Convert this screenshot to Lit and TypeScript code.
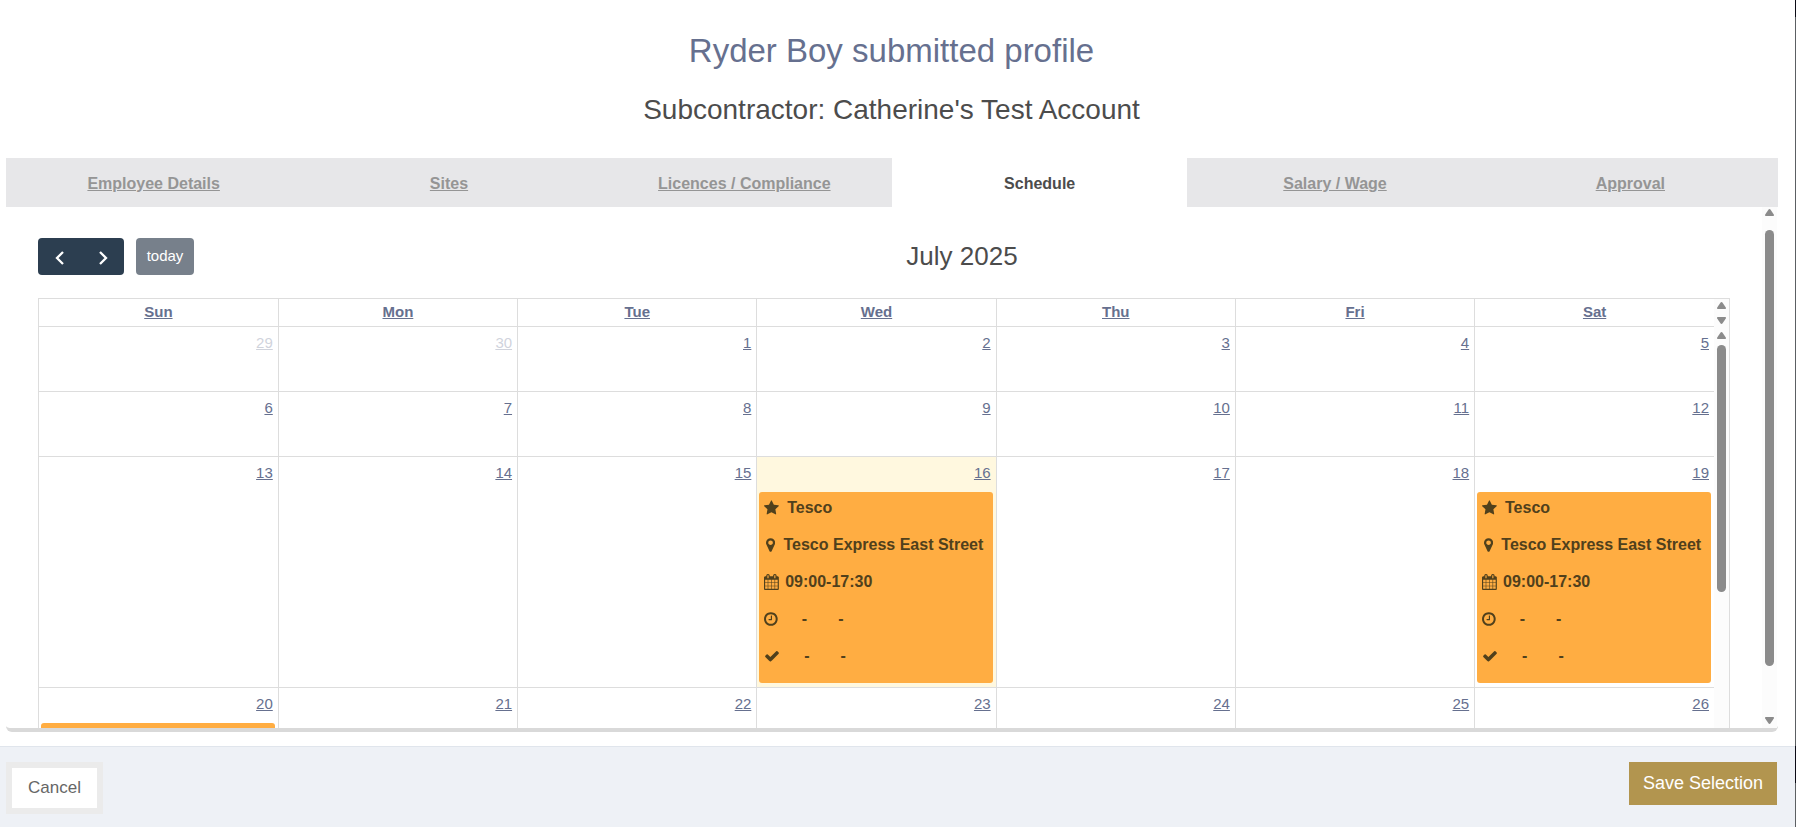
import { LitElement, html, css, svg } from "lit";
import { customElement, property, state } from "lit/decorators.js";
import { classMap } from "lit/directives/class-map.js";

interface Shift {
  client: string;
  site: string;
  hours: string;
}

interface Day {
  num: number;
  other?: boolean;
  today?: boolean;
  booked?: boolean;
  shift?: Shift;
}

const WEEKDAYS = ["Sun", "Mon", "Tue", "Wed", "Thu", "Fri", "Sat"];
const BOOKED_DAYS = [16, 19, 20];
const TODAY = 16;

const TESCO: Shift = {
  client: "Tesco",
  site: "Tesco Express East Street",
  hours: "09:00-17:30",
};

/* Details known so far; a booked day without details gets an empty card. */
const SHIFTS: Record<number, Shift> = { 16: TESCO, 19: TESCO };

const TABS = [
  "Employee Details",
  "Sites",
  "Licences / Compliance",
  "Schedule",
  "Salary / Wage",
  "Approval",
];

function buildWeeks(): Day[][] {
  const days: Day[] = [{ num: 29, other: true }, { num: 30, other: true }];
  for (let n = 1; n <= 26; n++) {
    days.push({
      num: n,
      today: n === TODAY,
      booked: BOOKED_DAYS.includes(n),
      shift: SHIFTS[n],
    });
  }
  const weeks: Day[][] = [];
  for (let i = 0; i < days.length; i += 7) weeks.push(days.slice(i, i + 7));
  return weeks;
}

/* Glyphs share a 1792-unit em, baseline at y=1536. */
const ICONS = {
  star: {
    width: 1664,
    path: svg`<path d="M1664 647q0 22-26 48l-363 354 86 500q1 7 1 20 0 21-10.500 35.500t-30.500 14.500q-19 0-40-12l-449-236-449 236q-22 12-40 12-21 0-31.500-14.500t-10.500-35.500q0-6 2-20l86-500-364-354q-25-27-25-48 0-37 56-46l502-73 225-455q19-41 49-41t49 41l225 455 502 73q56 9 56 46z"/>`,
  },
  pin: {
    width: 1024,
    path: svg`<path d="M768 640q0-106-75-181t-181-75-181 75-75 181 75 181 181 75 181-75 75-181zm256 0q0 109-33 179l-364 774q-16 33-47.500 52t-67.500 19-67.500-19-46.500-52l-365-774q-33-70-33-179 0-212 150-362t362-150 362 150 150 362z"/>`,
  },
  calendar: {
    width: 1664,
    path: svg`<path d="M128 1664h288v-288h-288v288zm352 0h320v-288h-320v288zm-352-352h288v-320h-288v320zm352 0h320v-320h-320v320zm-352-384h288v-288h-288v288zm736 736h320v-288h-320v288zm-384-736h320v-288h-320v288zm768 736h288v-288h-288v288zm-384-352h320v-320h-320v320zm-352-864v-288q0-13-9.500-22.500t-22.500-9.500h-64q-13 0-22.500 9.500t-9.500 22.500v288q0 13 9.500 22.500t22.500 9.500h64q13 0 22.500-9.500t9.500-22.500zm736 864h288v-320h-288v320zm-384-384h320v-288h-320v288zm384 0h288v-288h-288v288zm32-480v-288q0-13-9.500-22.500t-22.500-9.500h-64q-13 0-22.500 9.500t-9.500 22.500v288q0 13 9.500 22.500t22.500 9.500h64q13 0 22.500-9.500t9.500-22.500zm384-64v1280q0 52-38 90t-90 38h-1408q-52 0-90-38t-38-90v-1280q0-52 38-90t90-38h128v-96q0-66 47-113t113-47h64q66 0 113 47t47 113v96h384v-96q0-66 47-113t113-47h64q66 0 113 47t47 113v96h128q52 0 90 38t38 90z"/>`,
  },
  clock: {
    width: 1536,
    path: svg`<path d="M896 544v448q0 14-9 23t-23 9h-320q-14 0-23-9t-9-23v-64q0-14 9-23t23-9h224v-352q0-14 9-23t23-9h64q14 0 23 9t9 23zm416 352q0-148-73-273t-198-198-273-73-273 73-198 198-73 273 73 273 198 198 273 73 273-73 198-198 73-273zm224 0q0 209-103 385.500t-279.500 279.500-385.500 103-385.500-103-279.500-279.500-103-385.500 103-385.500 279.500-279.500 385.500-103 385.500 103 279.500 279.500 103 385.500z"/>`,
  },
  check: {
    width: 1792,
    path: svg`<path d="M1671 566q0 40-28 68l-724 724-136 136q-28 28-68 28t-68-28l-136-136-362-362q-28-28-28-68t28-68l136-136q28-28 68-28t68 28l294 295 656-657q28-28 68-28t68 28l136 136q28 28 28 68z"/>`,
  },
};

const icon = (name: keyof typeof ICONS) => html`
  <svg class="icon ${name}" viewBox="0 0 ${ICONS[name].width} 1792" aria-hidden="true">
    ${ICONS[name].path}
  </svg>
`;

@customElement("shift-card")
class ShiftCard extends LitElement {
  @property({ attribute: false }) shift?: Shift;

  static styles = css`
    :host {
      display: block;
      box-sizing: border-box;
      min-height: 191px;
      margin: 0 3px 0 2px;
      padding: 1px 4px 5px;
      border-radius: 3px;
      background: #ffad42;
      color: #50401c;
      font-size: 16px;
      font-weight: bold;
      line-height: 30px;
    }
    .line {
      display: flex;
      align-items: center;
      height: 30px;
      margin-bottom: 7px;
    }
    .line span {
      white-space: pre;
    }
    .icon {
      height: 16px;
      flex: none;
      fill: currentColor;
      margin-left: 1px;
      margin-right: 6px;
    }
    .star {
      margin-right: 8px;
    }
    .pin {
      margin: 0 8px 0 3px;
    }
  `;

  render() {
    if (!this.shift) return html``;
    return html`
      <div class="line">${icon("star")}<span>${this.shift.client}</span></div>
      <div class="line">${icon("pin")}<span>${this.shift.site}</span></div>
      <div class="line">${icon("calendar")}<span>${this.shift.hours}</span></div>
      <div class="line">${icon("clock")}<span>${"    -       -"}</span></div>
      <div class="line">${icon("check")}<span>${"    -       -"}</span></div>
    `;
  }
}

@customElement("scroll-rail")
class ScrollRail extends LitElement {
  @property({ type: Number }) lead = 0;
  @property({ type: Number }) thumb = 0;
  @property({ type: Number }) rest = 1;
  @property({ type: Boolean }) open = false;

  static styles = css`
    :host {
      display: flex;
      flex-direction: column;
      align-items: center;
      flex: none;
      box-sizing: border-box;
      width: 15px;
      padding: 3px 0;
      background: #fcfcfc;
    }
    .arrow {
      width: 9px;
      height: 7px;
      flex: none;
      fill: #8b8b8b;
    }
    .track {
      flex: 1;
      width: 9px;
      display: flex;
      flex-direction: column;
    }
    .thumb {
      border-radius: 5px;
      background: #8b8b8b;
    }
  `;

  render() {
    return html`
      <svg class="arrow" viewBox="0 0 9 7"><path d="M4.500 0Q5.100 0 5.600 0.700L8.800 5.600Q9.400 6.900 8.200 7H0.800Q-0.400 6.900 0.200 5.600L3.400 0.700Q3.900 0 4.500 0Z" /></svg>
      <div class="track">
        <div style="flex:${this.lead}"></div>
        <div class="thumb" style="flex:${this.thumb}"></div>
        <div style="flex:${this.rest}"></div>
      </div>
      ${this.open
        ? ""
        : html`<svg class="arrow" viewBox="0 0 9 7"><path d="M4.500 7Q5.100 7 5.600 6.300L8.800 1.400Q9.400 0.100 8.200 0H0.800Q-0.400 0.100 0.200 1.400L3.400 6.300Q3.900 7 4.500 7Z" /></svg>`}
    `;
  }
}

@customElement("month-grid")
class MonthGrid extends LitElement {
  private weeks = buildWeeks();

  static styles = css`
    :host {
      display: flex;
      flex-direction: column;
      min-height: 0;
      border: 1px solid #ddd;
      border-bottom: 0;
      font-size: 15px;
    }
    .row {
      display: flex;
    }
    .body {
      flex: 1;
      min-height: 0;
    }
    .scroller {
      flex: 1;
      min-width: 0;
      overflow: hidden;
    }
    table {
      width: 100%;
      border-collapse: collapse;
      table-layout: fixed;
    }
    th,
    td {
      padding: 0;
      border: 0 solid #ddd;
      border-bottom-width: 1px;
      vertical-align: top;
    }
    th + th,
    td + td {
      border-left-width: 1px;
    }
    th {
      height: 27px;
      line-height: 25px;
    }
    td {
      height: 64px;
    }
    a {
      color: #66708f;
    }
    .num {
      display: block;
      box-sizing: border-box;
      padding: 4px 5px 0;
      height: 35px;
      line-height: 24px;
      text-align: right;
    }
    .other {
      opacity: 0.3;
    }
    .today {
      background: #fff8df;
    }
    shift-card {
      margin-bottom: 4px;
    }
    .body scroll-rail {
      padding: 5px 0 0;
    }
  `;

  render() {
    return html`
      <div class="row">
        <div class="scroller">
          <table>
            <tr>
              ${WEEKDAYS.map((d) => html`<th scope="col"><a href="#${d}">${d}</a></th>`)}
            </tr>
          </table>
        </div>
        <scroll-rail></scroll-rail>
      </div>
      <div class="row body">
        <div class="scroller">
          <table>
            ${this.weeks.map(
              (week) => html`<tr>
                ${week.map(
                  (day) => html`<td class=${classMap({ today: !!day.today })}>
                    <div class=${classMap({ num: true, other: !!day.other })}>
                      <a href="#day-${day.num}">${day.num}</a>
                    </div>
                    ${day.booked
                      ? html`<shift-card .shift=${day.shift}></shift-card>`
                      : ""}
                  </td>`,
                )}
              </tr>`,
            )}
          </table>
        </div>
        <scroll-rail open .lead=${6} .thumb=${247} .rest=${136}></scroll-rail>
      </div>
    `;
  }
}

@customElement("app-root")
class AppRoot extends LitElement {
  @state() private active = "Schedule";

  static styles = css`
    :host {
      display: flex;
      box-sizing: border-box;
      height: 100vh;
      background: #fff;
      color: #4c4c4c;
      font-family: "Liberation Sans", Arial, sans-serif;
      font-size: 16px;
    }
    .page {
      display: flex;
      flex-direction: column;
      flex: 1;
      min-width: 0;
    }
    .edge {
      width: 1px;
      background: linear-gradient(
        #0b0b16 17px,
        #5c6063 17px calc(100% - 81px),
        #0b0b16 calc(100% - 81px) calc(100% - 44px),
        #5c6063 calc(100% - 44px)
      );
    }
    header {
      padding: 31px 12px 28px 0;
      text-align: center;
    }
    h1,
    h2,
    h3 {
      margin: 0;
      font-weight: normal;
    }
    h1 {
      color: #66708f;
      font-size: 33px;
      line-height: 40px;
    }
    h2 {
      margin-top: 19px;
      font-size: 28px;
      line-height: 40px;
    }
    .panel {
      display: flex;
      flex-direction: column;
      flex: 1;
      min-height: 0;
      margin: 0 17px 14px 6px;
      border-bottom: 4px solid #d9d9d9;
      border-radius: 0 0 6px 6px;
    }
    nav {
      display: grid;
      grid-template-columns: repeat(6, 1fr);
      flex: none;
      height: 49px;
      line-height: 51px;
      text-align: center;
      font-weight: bold;
    }
    .tab {
      height: 49px;
      background: #e7e7e9;
      color: #959595;
    }
    .tab.active {
      background: #fff;
      color: #4c4c4c;
      text-decoration: none;
    }
    .pane {
      display: flex;
      flex: 1;
      min-height: 0;
      padding-right: 1px;
    }
    .pane > scroll-rail {
      padding: 2px 0 4px;
    }
    .calendar {
      display: flex;
      flex-direction: column;
      flex: 1;
      min-width: 0;
      padding: 31px 32px 0;
    }
    .toolbar {
      display: flex;
      align-items: flex-start;
      flex: none;
      height: 37px;
      margin-bottom: 23px;
    }
    .toolbar h3 {
      flex: 1;
      text-align: center;
      font-size: 26px;
      line-height: 36px;
    }
    .side {
      display: flex;
      gap: 12px;
      height: 37px;
    }
    .pair {
      display: flex;
      border-radius: 4px;
      overflow: hidden;
    }
    button {
      font: inherit;
      border: 0;
      padding: 0;
    }
    .arrow {
      width: 43px;
      background: #2c3e50;
    }
    .arrow svg {
      display: block;
      width: 20px;
      height: 20px;
      margin: 2px auto 0;
      fill: none;
      stroke: #fff;
      stroke-width: 2.3;
    }
    .today {
      width: 58px;
      padding-bottom: 2px;
      border-radius: 4px;
      background: #77808b;
      color: #fff;
      font-size: 15px;
    }
    month-grid {
      flex: 1;
    }
    footer {
      display: flex;
      justify-content: space-between;
      align-items: flex-start;
      box-sizing: border-box;
      height: 81px;
      padding: 15px 18px 0 6px;
      border-top: 1px solid #e0e5ec;
      background: #eef1f6;
    }
    .cancel {
      height: 52px;
      padding: 0 16px;
      border: 6px solid #ebebeb;
      background: #fff;
      color: #666;
      font-size: 17px;
    }
    .save {
      height: 43px;
      padding: 0 14px;
      background: #b2954f;
      color: #fff;
      font-size: 18px;
    }
  `;

  render() {
    return html`
      <div class="page">
        <header>
          <h1>Ryder Boy submitted profile</h1>
          <h2>Subcontractor: Catherine's Test Account</h2>
        </header>
        <section class="panel">
          <nav>
            ${TABS.map(
              (t) => html`<a
                class=${classMap({ tab: true, active: t === this.active })}
                href="#"
                @click=${(e: Event) => {
                  e.preventDefault();
                  this.active = t;
                }}
                >${t}</a
              >`,
            )}
          </nav>
          <div class="pane">
            <div class="calendar">
              <div class="toolbar">
                <div class="side">
                  <div class="pair">
                    <button class="arrow" aria-label="Previous month">
                      <svg viewBox="0 0 20 20"><path d="M13 4L7 10L13 16" /></svg>
                    </button>
                    <button class="arrow" aria-label="Next month">
                      <svg viewBox="0 0 20 20"><path d="M7 4L13 10L7 16" /></svg>
                    </button>
                  </div>
                  <button class="today">today</button>
                </div>
                <h3>July 2025</h3>
              </div>
              <month-grid></month-grid>
            </div>
            <scroll-rail .lead=${14} .thumb=${436} .rest=${51}></scroll-rail>
          </div>
        </section>
        <footer>
          <button class="cancel">Cancel</button>
          <button class="save">Save Selection</button>
        </footer>
      </div>
      <div class="edge"></div>
    `;
  }
}
